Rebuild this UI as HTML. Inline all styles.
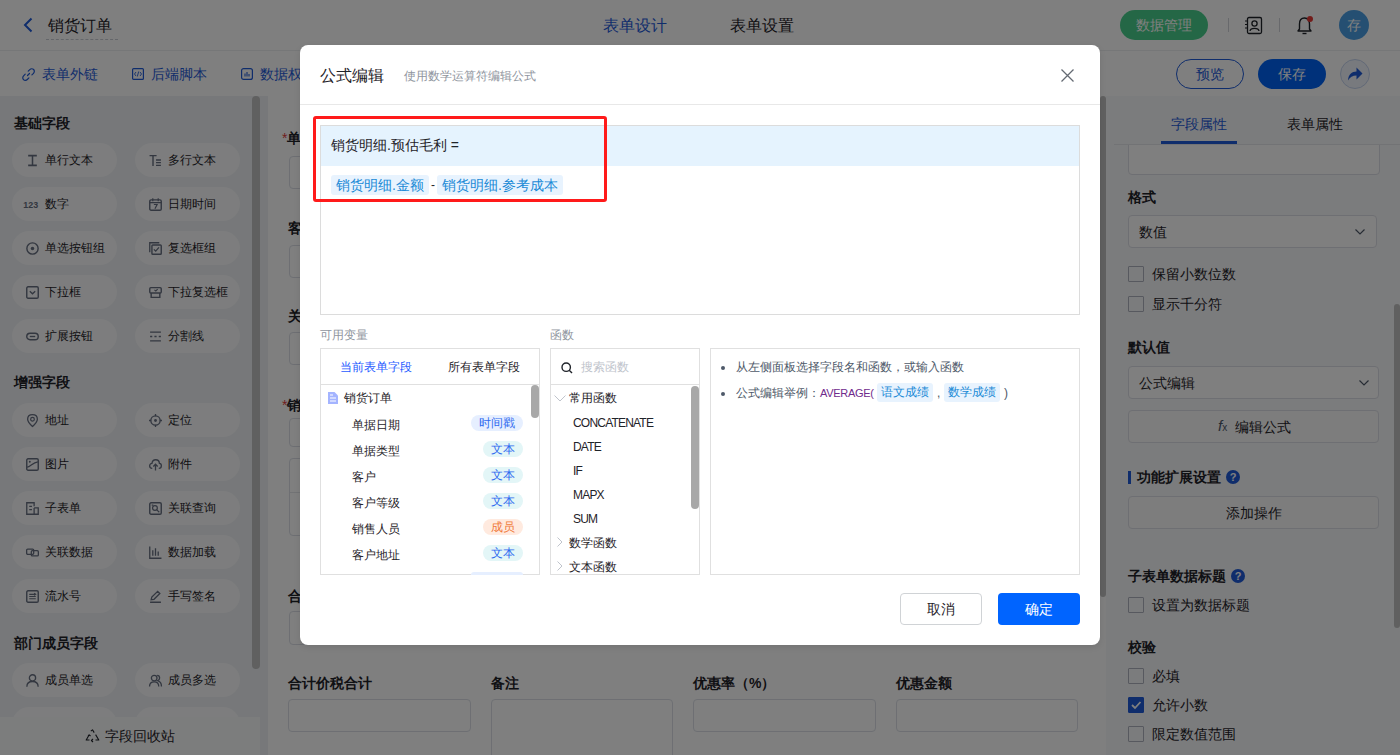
<!DOCTYPE html>
<html><head><meta charset="utf-8">
<style>
*{box-sizing:border-box;margin:0;padding:0}
html,body{width:1400px;height:755px;overflow:hidden;background:#fff;font-family:"Liberation Sans",sans-serif;color:#1f2329}
.a{position:absolute}
.t{position:absolute;white-space:nowrap;line-height:20px}
svg{display:block}
/* header */
#hdr{left:0;top:0;width:1400px;height:51px;background:#fff;border-bottom:1px solid #eceef1}
#tb{left:0;top:51px;width:1400px;height:45px;background:#fff}
/* left panel */
#lp{left:0;top:96px;width:260px;height:659px;background:#eef0f4}
.sec{position:absolute;left:14px;font-size:14px;font-weight:bold;color:#1f2329;line-height:20px}
.pill{position:absolute;width:105px;height:34px;border-radius:17px;background:#fafbfc}
.pill .ic{position:absolute;left:14px;top:10.5px;width:13px;height:13px}
.pill span{position:absolute;left:33px;top:8px;font-size:12px;line-height:18px;color:#1f2329;white-space:nowrap}
/* form */
#fm{left:268px;top:96px;width:832px;height:659px;background:#fff}
.lbl{position:absolute;font-size:14px;font-weight:bold;line-height:20px;color:#1f2329;white-space:nowrap}
.inp{position:absolute;height:33px;border:1px solid #dcdfe6;border-radius:4px;background:#fff}
/* right panel */
#rp{left:1106px;top:96px;width:294px;height:659px;background:#f7f8fa}
.cb{position:absolute;left:1128px;width:16px;height:16px;border:1px solid #aeb3bf;border-radius:1px;background:transparent}
.rlbl{position:absolute;left:1152px;font-size:14px;line-height:20px;color:#1f2329;white-space:nowrap}
.rsec{position:absolute;left:1128px;font-size:14px;font-weight:bold;line-height:20px;color:#1f2329;white-space:nowrap}
.rbox{position:absolute;left:1128px;width:251px;height:33px;border:1px solid #dcdfe6;border-radius:4px;background:#fff}
/* mask */
#mask{left:0;top:0;width:1400px;height:755px;background:rgba(0,0,0,.5)}
/* modal */
#md{left:300px;top:45px;width:800px;height:600px;background:#fff;border-radius:8px;box-shadow:0 2px 6px rgba(0,0,0,.1)}
.ml{position:absolute;font-size:12px;line-height:16px;color:#8f959e;white-space:nowrap}
.panel{position:absolute;top:348px;height:227px;border:1px solid #e0e0e0;background:#fff;overflow:hidden}
.vrow{position:absolute;left:352px;font-size:12px;line-height:16px;color:#1f2329;white-space:nowrap}
.tag{position:absolute;height:16px;border-radius:8px;font-size:12px;line-height:16px;text-align:center;white-space:nowrap}
.frow{position:absolute;font-size:12px;line-height:16px;color:#1f2329;white-space:nowrap}
.chip{position:absolute;height:20px;background:#e8f3fe;color:#1a8ad6;font-size:14px;line-height:20px;border-radius:3px;white-space:nowrap;text-align:center}
</style></head>
<body>
<!-- ============ PAGE ============ -->
<div id="hdr" class="a"></div>
<svg class="a" style="left:22px;top:17px" width="12" height="16" viewBox="0 0 12 16"><path d="M9.5 1.5 L3 8 L9.5 14.5" fill="none" stroke="#1f5bd8" stroke-width="2"/></svg>
<div class="t" style="left:48px;top:15px;font-size:16px;line-height:22px;color:#1f2329">销货订单</div>
<div class="a" style="left:46px;top:39px;width:72px;border-top:1px dashed #c9cdd4"></div>
<div class="t" style="left:603px;top:15px;font-size:16px;line-height:22px;color:#1f5bd8">表单设计</div>
<div class="t" style="left:730px;top:15px;font-size:16px;line-height:22px;color:#1f2329">表单设置</div>
<div class="a" style="left:1120px;top:10px;width:88px;height:30px;border-radius:15px;background:#48cf8c"></div>
<div class="t" style="left:1136px;top:15px;font-size:14px;color:#fff">数据管理</div>
<div class="a" style="left:1228px;top:18px;width:1px;height:14px;background:#d0d3d9"></div>
<svg class="a" style="left:1244px;top:16px" width="19" height="19" viewBox="0 0 19 19"><rect x="3.5" y="1.5" width="14" height="16" rx="1.5" fill="none" stroke="#1f2329" stroke-width="1.3"/><circle cx="10.5" cy="7.5" r="2.6" fill="none" stroke="#1f2329" stroke-width="1.3"/><path d="M6 15 C6.5 11.5 14.5 11.5 15 15" fill="none" stroke="#1f2329" stroke-width="1.3"/><path d="M1 5h3M1 8.5h3M1 12h3" stroke="#1f2329" stroke-width="1.2"/></svg>
<div class="a" style="left:1279px;top:18px;width:1px;height:14px;background:#d0d3d9"></div>
<svg class="a" style="left:1296px;top:16px" width="18" height="19" viewBox="0 0 18 19"><path d="M8.5 2 C4.5 2 3.5 5.5 3.5 8 V13 L2 15 H15 L13.5 13 V8 C13.5 5.5 12.5 2 8.5 2Z" fill="none" stroke="#1f2329" stroke-width="1.4" stroke-linejoin="round"/><path d="M6.5 17.5 H10.5" stroke="#1f2329" stroke-width="1.4"/><circle cx="14" cy="3" r="3" fill="#e53935"/></svg>
<div class="a" style="left:1339px;top:10px;width:30px;height:30px;border-radius:15px;background:#4a9fe5"></div>
<div class="t" style="left:1347px;top:15px;font-size:14px;color:#fff">存</div>
<div id="tb" class="a"></div>
<svg class="a" style="left:22px;top:68px" width="13" height="13" viewBox="0 0 13 13"><path d="M5.5 7.5 L7.5 5.5 M6.2 3.2 L7.8 1.6 C8.9 0.5 10.6 0.5 11.6 1.5 C12.6 2.5 12.6 4.2 11.5 5.3 L9.9 6.9 M3.2 6.2 L1.6 7.8 C0.5 8.9 0.5 10.6 1.5 11.6 C2.5 12.6 4.2 12.6 5.3 11.5 L6.9 9.9" fill="none" stroke="#1f5bd8" stroke-width="1.2" stroke-linecap="round"/></svg>
<div class="t" style="left:42px;top:64px;font-size:14px;color:#1f5bd8">表单外链</div>
<svg class="a" style="left:132px;top:68px" width="12" height="12" viewBox="0 0 12 12"><rect x="0.6" y="0.6" width="10.8" height="10.8" rx="1" fill="none" stroke="#1f5bd8" stroke-width="1.2"/><path d="M4 4 L2.5 6 L4 8 M8 4 L9.5 6 L8 8 M6.7 3.5 L5.3 8.5" fill="none" stroke="#1f5bd8" stroke-width="0.9"/></svg>
<div class="t" style="left:151px;top:64px;font-size:14px;color:#1f5bd8">后端脚本</div>
<svg class="a" style="left:241px;top:68px" width="12" height="12" viewBox="0 0 12 12"><rect x="0.6" y="0.6" width="10.8" height="10.8" rx="2" fill="none" stroke="#1f5bd8" stroke-width="1.2"/><path d="M4 5.5V8.5M6 4V8.5M8 6V8.5" stroke="#1f5bd8" stroke-width="1.1"/></svg>
<div class="t" style="left:260px;top:64px;font-size:14px;color:#1f5bd8">数据权限</div>
<div class="a" style="left:1176px;top:59px;width:68px;height:30px;border-radius:15px;border:1px solid #1f5bd8;background:#fff"></div>
<div class="t" style="left:1196px;top:64px;font-size:14px;color:#1f5bd8">预览</div>
<div class="a" style="left:1258px;top:59px;width:68px;height:30px;border-radius:15px;background:#0062f5"></div>
<div class="t" style="left:1278px;top:64px;font-size:14px;color:#fff">保存</div>
<div class="a" style="left:1340px;top:59px;width:30px;height:30px;border-radius:15px;border:1px solid #c5d3ee;background:#f0f4fc"></div>
<svg class="a" style="left:1347px;top:66px" width="16" height="16" viewBox="0 0 16 16"><path d="M1 14.5 C1.2 8.5 5 5.5 9.5 5.5 V1.5 L15.5 7.5 L9.5 13.5 V9.5 C5.5 9.5 3 11 1 14.5Z" fill="#1f5bd8"/></svg>
<div id="lp" class="a">
<div class="sec" style="top:17px">基础字段</div>
<div class="pill" style="left:12px;top:47px"><svg class="ic" width="13" height="13" viewBox="0 0 12 12" overflow="visible"><path d="M2 1.5H10M2 10.5H10M6 1.5V10.5" stroke="#666e80" stroke-width="1.4" fill="none"/></svg><span>单行文本</span></div>
<div class="pill" style="left:135px;top:47px"><svg class="ic" width="13" height="13" viewBox="0 0 12 12" overflow="visible"><path d="M0.5 1.5H7M3.7 1.5V11M6.5 5.5H11M6.5 8H11M6.5 10.5H11" stroke="#666e80" stroke-width="1.3" fill="none"/></svg><span>多行文本</span></div>
<div class="pill" style="left:12px;top:91px"><svg class="ic" width="13" height="13" viewBox="0 0 12 12" overflow="visible"><text x="-2.5" y="9" font-size="8.2" font-weight="bold" font-family="Liberation Sans" fill="#666e80">123</text></svg><span>数字</span></div>
<div class="pill" style="left:135px;top:91px"><svg class="ic" width="13" height="13" viewBox="0 0 12 12" overflow="visible"><rect x="0.7" y="1.7" width="10.6" height="9.6" rx="1.2" fill="none" stroke="#666e80" stroke-width="1.3"/><path d="M3.5 0.3V3M8.5 0.3V3M0.7 4.3H11.3M4.5 6H7.5L5.5 10" stroke="#666e80" stroke-width="1.1" fill="none"/></svg><span>日期时间</span></div>
<div class="pill" style="left:12px;top:135px"><svg class="ic" width="13" height="13" viewBox="0 0 12 12" overflow="visible"><circle cx="6" cy="6" r="5.2" fill="none" stroke="#666e80" stroke-width="1.3"/><circle cx="6" cy="6" r="1.6" fill="#666e80"/></svg><span>单选按钮组</span></div>
<div class="pill" style="left:135px;top:135px"><svg class="ic" width="13" height="13" viewBox="0 0 12 12" overflow="visible"><path d="M0.7 9.5V0.7H9.5" fill="none" stroke="#666e80" stroke-width="1.2"/><rect x="2.7" y="2.7" width="8.6" height="8.6" rx="0.8" fill="none" stroke="#666e80" stroke-width="1.3"/><path d="M4.5 6.8L6.2 8.4L9.2 4.9" fill="none" stroke="#666e80" stroke-width="1.2"/></svg><span>复选框组</span></div>
<div class="pill" style="left:12px;top:179px"><svg class="ic" width="13" height="13" viewBox="0 0 12 12" overflow="visible"><rect x="0.7" y="0.7" width="10.6" height="10.6" rx="1.2" fill="none" stroke="#666e80" stroke-width="1.3"/><path d="M3.5 4.8L6 7.2L8.5 4.8" fill="none" stroke="#666e80" stroke-width="1.2"/></svg><span>下拉框</span></div>
<div class="pill" style="left:135px;top:179px"><svg class="ic" width="13" height="13" viewBox="0 0 12 12" overflow="visible"><rect x="0.7" y="1.5" width="10.6" height="5" rx="1" fill="none" stroke="#666e80" stroke-width="1.3"/><path d="M2 6.5V10.5H10V6.5" fill="none" stroke="#666e80" stroke-width="1.3"/><path d="M5 3.5L6.3 4.6L8 2.8" fill="none" stroke="#666e80" stroke-width="1"/></svg><span>下拉复选框</span></div>
<div class="pill" style="left:12px;top:223px"><svg class="ic" width="13" height="13" viewBox="0 0 12 12" overflow="visible"><rect x="0.7" y="3" width="10.6" height="6" rx="3" fill="none" stroke="#666e80" stroke-width="1.3"/><path d="M3.5 6H8.5" stroke="#666e80" stroke-width="1.2"/></svg><span>扩展按钮</span></div>
<div class="pill" style="left:135px;top:223px"><svg class="ic" width="13" height="13" viewBox="0 0 12 12" overflow="visible"><path d="M1 2H11M1 6H3M5 6H7M9 6H11M1 10H11" stroke="#666e80" stroke-width="1.2"/></svg><span>分割线</span></div>
<div class="sec" style="top:276px">增强字段</div>
<div class="pill" style="left:12px;top:307px"><svg class="ic" width="13" height="13" viewBox="0 0 12 12" overflow="visible"><path d="M6 11.5C6 11.5 1.5 7.3 1.5 4.8C1.5 2.2 3.5 0.6 6 0.6C8.5 0.6 10.5 2.2 10.5 4.8C10.5 7.3 6 11.5 6 11.5Z" fill="none" stroke="#666e80" stroke-width="1.2"/><circle cx="6" cy="4.8" r="1.7" fill="none" stroke="#666e80" stroke-width="1.1"/></svg><span>地址</span></div>
<div class="pill" style="left:135px;top:307px"><svg class="ic" width="13" height="13" viewBox="0 0 12 12" overflow="visible"><circle cx="6" cy="6" r="4.3" fill="none" stroke="#666e80" stroke-width="1.2"/><circle cx="6" cy="6" r="1.3" fill="#666e80"/><path d="M6 0V2M6 10V12M0 6H2M10 6H12" stroke="#666e80" stroke-width="1.2"/></svg><span>定位</span></div>
<div class="pill" style="left:12px;top:351px"><svg class="ic" width="13" height="13" viewBox="0 0 12 12" overflow="visible"><rect x="0.7" y="0.7" width="10.6" height="10.6" rx="1.2" fill="none" stroke="#666e80" stroke-width="1.3"/><path d="M1 8.5C4 8.5 6 4 11 3.5" fill="none" stroke="#666e80" stroke-width="1.1"/><circle cx="3.5" cy="3.5" r="0.9" fill="#666e80"/></svg><span>图片</span></div>
<div class="pill" style="left:135px;top:351px"><svg class="ic" width="13" height="13" viewBox="0 0 12 12" overflow="visible"><path d="M3 9.5H2.8C1.5 9.5 0.6 8.4 0.6 7.2C0.6 6 1.5 5 2.7 5C3 2.8 4.4 1.6 6.2 1.6C8.2 1.6 9.5 3 9.6 4.9C10.7 5 11.4 6 11.4 7.1C11.4 8.4 10.5 9.5 9.2 9.5H9M6 5.8V11.5M4 7.8L6 5.8L8 7.8" fill="none" stroke="#666e80" stroke-width="1.2"/></svg><span>附件</span></div>
<div class="pill" style="left:12px;top:395px"><svg class="ic" width="13" height="13" viewBox="0 0 12 12" overflow="visible"><path d="M7.5 4V0.7H0.7V11.3H7.5 M7.5 5.5H11.3V11.3H7.5V5.5 M3 4H5.5M3 7H5.5" fill="none" stroke="#666e80" stroke-width="1.2"/></svg><span>子表单</span></div>
<div class="pill" style="left:135px;top:395px"><svg class="ic" width="13" height="13" viewBox="0 0 12 12" overflow="visible"><rect x="0.7" y="0.7" width="10.6" height="10.6" rx="1.2" fill="none" stroke="#666e80" stroke-width="1.3"/><circle cx="5.5" cy="5.5" r="2.2" fill="none" stroke="#666e80" stroke-width="1.1"/><path d="M7 7L9.5 9.5M2.5 2.8H4" stroke="#666e80" stroke-width="1.1"/></svg><span>关联查询</span></div>
<div class="pill" style="left:12px;top:439px"><svg class="ic" width="13" height="13" viewBox="0 0 12 12" overflow="visible"><rect x="0.6" y="2.8" width="6.5" height="5" rx="1" fill="none" stroke="#666e80" stroke-width="1.2"/><rect x="4.9" y="4.2" width="6.5" height="5" rx="1" fill="none" stroke="#666e80" stroke-width="1.2"/></svg><span>关联数据</span></div>
<div class="pill" style="left:135px;top:439px"><svg class="ic" width="13" height="13" viewBox="0 0 12 12" overflow="visible"><path d="M0.7 0.5V11.3H11.5M3.5 4V9M6 2V9M8.5 5V9" fill="none" stroke="#666e80" stroke-width="1.2"/></svg><span>数据加载</span></div>
<div class="pill" style="left:12px;top:483px"><svg class="ic" width="13" height="13" viewBox="0 0 12 12" overflow="visible"><rect x="0.7" y="0.7" width="10.6" height="10.6" rx="1.2" fill="none" stroke="#666e80" stroke-width="1.3"/><path d="M3 4H9M3 6H9M3 8H9M7.5 3L9 4L7.5 5" fill="none" stroke="#666e80" stroke-width="1"/></svg><span>流水号</span></div>
<div class="pill" style="left:135px;top:483px"><svg class="ic" width="13" height="13" viewBox="0 0 12 12" overflow="visible"><path d="M2 9L2.6 6.5L8 1.2L10 3.2L4.6 8.6Z M1 11.3H11" fill="none" stroke="#666e80" stroke-width="1.2"/></svg><span>手写签名</span></div>
<div class="sec" style="top:537px">部门成员字段</div>
<div class="pill" style="left:12px;top:567px"><svg class="ic" width="13" height="13" viewBox="0 0 12 12" overflow="visible"><circle cx="6" cy="3.6" r="2.9" fill="none" stroke="#666e80" stroke-width="1.2"/><path d="M0.8 11.8C0.8 8.6 3 6.9 6 6.9C9 6.9 11.2 8.6 11.2 11.8" fill="none" stroke="#666e80" stroke-width="1.2"/></svg><span>成员单选</span></div>
<div class="pill" style="left:135px;top:567px"><svg class="ic" width="13" height="13" viewBox="0 0 12 12" overflow="visible"><circle cx="4.8" cy="3.8" r="2.6" fill="none" stroke="#666e80" stroke-width="1.2"/><path d="M0.5 11.5C0.5 8.6 2.3 7.2 4.8 7.2C7.3 7.2 9 8.6 9 11.5M7.5 1.3C8.8 1.3 9.8 2.4 9.8 3.8C9.8 5 9 5.8 8 6.2C10 6.8 11.5 8.5 11.5 11.5" fill="none" stroke="#666e80" stroke-width="1.2"/></svg><span>成员多选</span></div>
<div class="pill" style="left:12px;top:611px"><svg class="ic" width="13" height="13" viewBox="0 0 12 12" overflow="visible"></svg><span>部门单选</span></div>
<div class="pill" style="left:135px;top:611px"><svg class="ic" width="13" height="13" viewBox="0 0 12 12" overflow="visible"></svg><span>部门多选</span></div>
<div class="a" style="left:0;top:621px;width:260px;height:38px;background:#f9fafb"></div>
<svg class="a" style="left:85px;top:633px" width="15" height="14" viewBox="0 0 15 14"><path d="M5.8 2.2L7.5 0.8L9.2 3.6M10.6 5.6L13.8 11H10.5M8 13L6.4 11.5L8 10M4.5 11H1.2L4.2 5.8M3 6.8L4.2 5.8L5.5 7" fill="none" stroke="#1f2329" stroke-width="1.1" stroke-linejoin="round"/></svg>
<div class="t" style="left:105px;top:630px;font-size:14px;color:#1f2329">字段回收站</div>
<div class="a" style="left:252px;top:0;width:8px;height:573px;border-radius:4px;background:#c1c1c1"></div>
</div>
<div id="fm" class="a"></div>
<div class="a" style="left:260px;top:96px;width:8px;height:659px;background:#eef0f4"></div>
<div class="lbl" style="left:282px;top:128px"><span style="color:#e23c3c;font-weight:normal">*</span>单据编号</div>
<div class="inp" style="left:289px;top:156px;width:183px;height:33px"></div>
<div class="lbl" style="left:491px;top:128px"><span style="color:#e23c3c;font-weight:normal">*</span>单据日期</div>
<div class="inp" style="left:491px;top:156px;width:183px;height:33px"></div>
<div class="lbl" style="left:693px;top:128px"><span style="color:#e23c3c;font-weight:normal">*</span>单据类型</div>
<div class="inp" style="left:693px;top:156px;width:183px;height:33px"></div>
<div class="lbl" style="left:896px;top:128px"><span style="color:#e23c3c;font-weight:normal">*</span>销售员</div>
<div class="inp" style="left:896px;top:156px;width:183px;height:33px"></div>
<div class="lbl" style="left:288px;top:218px">客户</div>
<div class="inp" style="left:289px;top:245px;width:183px;height:33px"></div>
<div class="lbl" style="left:491px;top:218px">客户等级</div>
<div class="inp" style="left:491px;top:245px;width:183px;height:33px"></div>
<div class="lbl" style="left:693px;top:218px">联系人</div>
<div class="inp" style="left:693px;top:245px;width:183px;height:33px"></div>
<div class="lbl" style="left:896px;top:218px">联系电话</div>
<div class="inp" style="left:896px;top:245px;width:183px;height:33px"></div>
<div class="lbl" style="left:288px;top:306px">关联订单</div>
<div class="inp" style="left:289px;top:332px;width:183px;height:33px"></div>
<div class="lbl" style="left:491px;top:306px">客户地址</div>
<div class="inp" style="left:491px;top:332px;width:387px;height:33px"></div>
<div class="lbl" style="left:282px;top:395px"><span style="color:#e23c3c;font-weight:normal">*</span>销货明细</div>
<div class="inp" style="left:289px;top:418px;width:789px;height:29px"></div>
<div class="inp" style="left:289px;top:458px;width:789px;height:78px"></div>
<div class="a" style="left:290px;top:492px;width:787px;height:1px;background:#e5e6eb"></div>
<div class="lbl" style="left:288px;top:586px">合计金额</div>
<div class="inp" style="left:289px;top:611px;width:183px;height:34px"></div>
<div class="lbl" style="left:288px;top:673px">合计价税合计</div>
<div class="lbl" style="left:491px;top:673px">备注</div>
<div class="lbl" style="left:693px;top:673px">优惠率（%）</div>
<div class="lbl" style="left:896px;top:673px">优惠金额</div>
<div class="inp" style="left:288px;top:699px;width:183px;height:33px"></div>
<div class="inp" style="left:491px;top:699px;width:182px;height:80px"></div>
<div class="inp" style="left:693px;top:699px;width:183px;height:33px"></div>
<div class="inp" style="left:896px;top:699px;width:182px;height:33px"></div>
<div class="a" style="left:1100px;top:96px;width:6px;height:501px;border-radius:3px;background:#c1c1c1"></div>
<div id="rp" class="a"></div>
<div class="rbox" style="top:140px;height:35px;width:252px;border-radius:0 0 4px 4px"></div><div class="a" style="left:1106px;top:96px;width:288px;height:48px;background:#f7f8fa"></div>
<div class="t" style="left:1171px;top:114px;font-size:14px;color:#1f5bd8">字段属性</div>
<div class="t" style="left:1287px;top:114px;font-size:14px;color:#1f2329">表单属性</div>
<div class="a" style="left:1114px;top:144px;width:286px;height:1px;background:#e5e6eb"></div>
<div class="a" style="left:1161px;top:141px;width:76px;height:3px;background:#1f5bd8"></div>

<div class="rsec" style="top:187px">格式</div>
<div class="rbox" style="top:215px;width:249px"></div>
<div class="t" style="left:1139px;top:222px;font-size:14px;color:#1f2329">数值</div>
<svg class="a" style="left:1354px;top:228px" width="12" height="8" viewBox="0 0 12 8"><path d="M1.5 1.5L6 6L10.5 1.5" fill="none" stroke="#4e5969" stroke-width="1.2"/></svg>
<div class="cb" style="top:266px"></div><div class="rlbl" style="top:264px">保留小数位数</div>
<div class="cb" style="top:296px"></div><div class="rlbl" style="top:294px">显示千分符</div>
<div class="rsec" style="top:337px">默认值</div>
<div class="rbox" style="top:366px"></div>
<div class="t" style="left:1139px;top:373px;font-size:14px;color:#1f2329">公式编辑</div>
<svg class="a" style="left:1358px;top:379px" width="12" height="8" viewBox="0 0 12 8"><path d="M1.5 1.5L6 6L10.5 1.5" fill="none" stroke="#4e5969" stroke-width="1.2"/></svg>
<div class="rbox" style="top:410px;background:#fafafa"></div>
<div class="t" style="left:1218px;top:416px;font-size:15px;color:#4e5969;font-style:italic;font-family:'Liberation Sans',sans-serif">f<span style="font-size:10px;font-style:normal">x</span></div>
<div class="t" style="left:1235px;top:417px;font-size:14px;color:#1f2329">编辑公式</div>
<div class="a" style="left:1128px;top:471px;width:3px;height:13px;background:#1f5bd8"></div>
<div class="rsec" style="left:1137px;top:467px">功能扩展设置</div>
<div class="a" style="left:1226px;top:470px;width:14px;height:14px;border-radius:7px;background:#1f5bd8;color:#fff;font-size:11px;line-height:14px;text-align:center;font-weight:bold">?</div>
<div class="rbox" style="top:496px;height:33px;background:#fafafa"></div>
<div class="t" style="left:1226px;top:503px;font-size:14px;color:#1f2329">添加操作</div>
<div class="rsec" style="top:566px">子表单数据标题</div>
<div class="a" style="left:1231px;top:569px;width:14px;height:14px;border-radius:7px;background:#1f5bd8;color:#fff;font-size:11px;line-height:14px;text-align:center;font-weight:bold">?</div>
<div class="cb" style="top:597px"></div><div class="rlbl" style="top:595px">设置为数据标题</div>
<div class="rsec" style="top:637px">校验</div>
<div class="cb" style="top:668px"></div><div class="rlbl" style="top:666px">必填</div>
<div class="cb" style="top:697px;background:#1f5bd8;border-color:#1f5bd8"></div><svg class="a" style="left:1130px;top:699px" width="12" height="12" viewBox="0 0 12 12"><path d="M2 6L5 9L10.5 3" fill="none" stroke="#fff" stroke-width="1.8"/></svg><div class="rlbl" style="top:695px">允许小数</div>
<div class="cb" style="top:726px"></div><div class="rlbl" style="top:724px">限定数值范围</div>
<div class="a" style="left:1394px;top:304px;width:6px;height:324px;border-radius:3px;background:#c1c1c1"></div>

<!-- ============ MASK ============ -->
<div id="mask" class="a"></div>

<!-- ============ MODAL ============ -->
<div id="md" class="a"></div>
<div class="t" style="left:320px;top:65px;font-size:16px;line-height:22px;color:#1f2329">公式编辑</div>
<div class="t" style="left:404px;top:68px;font-size:12px;line-height:16px;color:#8f959e">使用数学运算符编辑公式</div>
<svg class="a" style="left:1061px;top:69px" width="13" height="13" viewBox="0 0 13 13"><path d="M0.5 0.5L12.5 12.5M12.5 0.5L0.5 12.5" stroke="#646a73" stroke-width="1.3"/></svg>
<div class="a" style="left:300px;top:104px;width:800px;height:1px;background:#e8e8e8"></div>
<div class="a" style="left:320px;top:125px;width:760px;height:190px;border:1px solid #dcdcdc"></div>
<div class="a" style="left:321px;top:126px;width:758px;height:40px;background:#e5f3fe"></div>
<div class="t" style="left:331px;top:135px;font-size:14px;color:#1f2329">销货明细.预估毛利 =</div>
<div class="chip" style="left:331px;top:175px;width:98px">销货明细.金额</div>
<div class="t" style="left:431px;top:175px;font-size:12px;color:#1f2329">-</div>
<div class="chip" style="left:437px;top:175px;width:126px">销货明细.参考成本</div>
<div class="a" style="left:313px;top:116px;width:294px;height:86px;border:3px solid #ff1a1a;border-radius:3px"></div>
<div class="ml" style="left:320px;top:327px">可用变量</div>
<div class="ml" style="left:550px;top:327px">函数</div>
<div class="panel" style="left:320px;width:220px"></div>
<div class="t" style="left:340px;top:359px;font-size:12px;line-height:16px;color:#1f5bff">当前表单字段</div>
<div class="t" style="left:448px;top:359px;font-size:12px;line-height:16px;color:#1f2329">所有表单字段</div>
<div class="a" style="left:321px;top:384px;width:218px;height:1px;background:#e0e0e0"></div>
<svg class="a" style="left:328px;top:392px" width="10" height="12" viewBox="0 0 10 12"><path d="M0 0H6.5L10 3.5V12H0Z" fill="#a4b4ff"/><path d="M2 6H8M2 9H8M2 3H5" stroke="#fff" stroke-width="1.2"/></svg>
<div class="t" style="left:344px;top:390px;font-size:12px;line-height:16px;color:#1f2329">销货订单</div>
<div class="vrow" style="top:416.5px">单据日期</div>
<div class="tag" style="left:471px;top:415px;width:52px;background:#e6efff;color:#2f6bf0">时间戳</div>
<div class="vrow" style="top:442.5px">单据类型</div>
<div class="tag" style="left:483px;top:441px;width:40px;background:#e3f6f7;color:#2f6bf0">文本</div>
<div class="vrow" style="top:468.5px">客户</div>
<div class="tag" style="left:483px;top:467px;width:40px;background:#e3f6f7;color:#2f6bf0">文本</div>
<div class="vrow" style="top:494.5px">客户等级</div>
<div class="tag" style="left:483px;top:493px;width:40px;background:#e3f6f7;color:#2f6bf0">文本</div>
<div class="vrow" style="top:520.5px">销售人员</div>
<div class="tag" style="left:483px;top:519px;width:40px;background:#ffeadf;color:#f07a3a">成员</div>
<div class="vrow" style="top:546.5px">客户地址</div>
<div class="tag" style="left:483px;top:545px;width:40px;background:#e3f6f7;color:#2f6bf0">文本</div>
<div class="tag" style="left:471px;top:572px;width:52px;height:3px;border-radius:8px 8px 0 0;background:#e6efff"></div>
<div class="a" style="left:531px;top:385px;width:8px;height:33px;border-radius:4px;background:#a8a8a8"></div>
<div class="panel" style="left:550px;width:150px"></div>
<svg class="a" style="left:561px;top:362px" width="12" height="12" viewBox="0 0 12 12"><circle cx="5.2" cy="5.2" r="4.2" fill="none" stroke="#1f2329" stroke-width="1.4"/><path d="M8.2 8.2L11 11" stroke="#1f2329" stroke-width="1.4"/></svg>
<div class="t" style="left:581px;top:359px;font-size:12px;line-height:16px;color:#c0c4cc">搜索函数</div>
<div class="a" style="left:551px;top:384px;width:148px;height:1px;background:#e0e0e0"></div>
<svg class="a" style="left:554px;top:395px" width="12" height="7" viewBox="0 0 12 7"><path d="M0.5 0.5L6 6L11.5 0.5" fill="none" stroke="#c0c4cc" stroke-width="1"/></svg>
<div class="frow" style="left:569px;top:390px">常用函数</div>
<div class="frow" style="left:573px;top:415px;letter-spacing:-0.8px">CONCATENATE</div>
<div class="frow" style="left:573px;top:438.5px;letter-spacing:-0.8px">DATE</div>
<div class="frow" style="left:573px;top:462.5px;letter-spacing:-0.8px">IF</div>
<div class="frow" style="left:573px;top:486.5px;letter-spacing:-0.8px">MAPX</div>
<div class="frow" style="left:573px;top:510.5px;letter-spacing:-0.8px">SUM</div>
<svg class="a" style="left:557px;top:537px" width="6" height="10" viewBox="0 0 6 10"><path d="M0.5 0.5L5 5L0.5 9.5" fill="none" stroke="#c0c4cc" stroke-width="1"/></svg>
<div class="frow" style="left:569px;top:534.5px">数学函数</div>
<svg class="a" style="left:557px;top:561px" width="6" height="10" viewBox="0 0 6 10"><path d="M0.5 0.5L5 5L0.5 9.5" fill="none" stroke="#c0c4cc" stroke-width="1"/></svg>
<div class="frow" style="left:569px;top:558.5px">文本函数</div>
<div class="a" style="left:691px;top:386px;width:8px;height:123px;border-radius:4px;background:#a8a8a8"></div>
<div class="panel" style="left:710px;width:370px"></div>
<div class="a" style="left:721px;top:366px;width:4px;height:4px;border-radius:2px;background:#4e5969"></div>
<div class="t" style="left:736px;top:359px;font-size:12px;line-height:16px;color:#4e5969">从左侧面板选择字段名和函数，或输入函数</div>
<div class="a" style="left:721px;top:392px;width:4px;height:4px;border-radius:2px;background:#4e5969"></div>
<div class="t" style="left:736px;top:385px;font-size:12px;line-height:16px;color:#4e5969">公式编辑举例：<span style="color:#702a8c;letter-spacing:-0.3px;font-size:11px">AVERAGE(</span></div>
<div class="chip" style="left:877px;top:383px;width:56px;height:19px;line-height:19px;font-size:12px">语文成绩</div>
<div class="t" style="left:937px;top:385px;font-size:12px;line-height:16px;color:#4e5969">,</div>
<div class="chip" style="left:944px;top:383px;width:56px;height:19px;line-height:19px;font-size:12px">数学成绩</div>
<div class="t" style="left:1004px;top:385px;font-size:12px;line-height:16px;color:#4e5969">)</div>
<div class="a" style="left:900px;top:593px;width:82px;height:32px;border:1px solid #d0d3d6;border-radius:4px;background:#fff"></div>
<div class="t" style="left:927px;top:599px;font-size:14px;color:#1f2329">取消</div>
<div class="a" style="left:998px;top:593px;width:82px;height:32px;border-radius:4px;background:#0064ff"></div>
<div class="t" style="left:1025px;top:599px;font-size:14px;color:#fff">确定</div>
</body></html>
